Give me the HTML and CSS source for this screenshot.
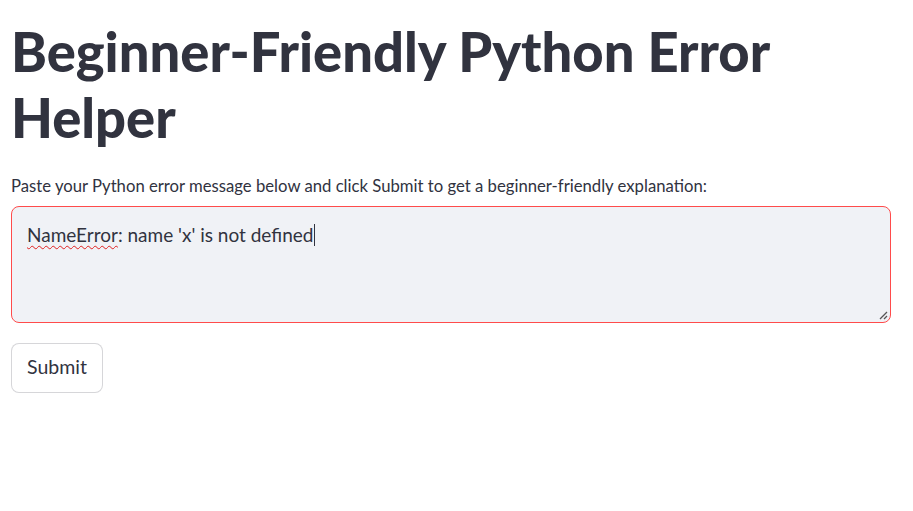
FILE: index.html
```html
<!DOCTYPE html>
<html lang="en">
<head>
<meta charset="utf-8">
<title>Beginner-Friendly Python Error Helper</title>
<link rel="stylesheet" href="styles.css">
</head>
<body>
<main class="app">
  <h1 class="title">Beginner-Friendly Python Error Helper</h1>
  <label class="label">Paste your Python error message below and click Submit to get a beginner-friendly explanation:</label>
  <div class="textarea" role="textbox" aria-multiline="true">
    <span class="misspelled">NameError</span>: name 'x' is not defined<span class="caret"></span>
    <svg class="grip" width="10" height="10" viewBox="0 0 10 10" aria-hidden="true">
      <path d="M2 9 L9 2 M6 9 L9 6" stroke="#555" stroke-width="1.3" fill="none"/>
    </svg>
  </div>
  <button class="button" type="button">Submit</button>
</main>
</body>
</html>
```

FILE: styles.css
```css
html, body {
  margin: 0;
  padding: 0;
  background: #ffffff;
}
body {
  font-family: Lato, "Noto Sans", sans-serif;
  color: #31333f;
}
.app {
  display: flex;
  flex-direction: column;
  align-items: flex-start;
  padding: 18px 22px 0 11px;
}
.title {
  margin: 0;
  font-size: 54.3px;
  line-height: 66px;
  font-weight: 900;
  color: #31333f;
}
.label {
  margin-top: 25px;
  font-size: 16.7px;
  line-height: 22px;
  color: #31333f;
}
.textarea {
  position: relative;
  box-sizing: border-box;
  align-self: stretch;
  margin-top: 9px;
  height: 117px;
  padding: 14px 15px;
  border: 1px solid #ff4b4b;
  border-radius: 8px;
  background: #f0f2f6;
  font-size: 19px;
  line-height: 28px;
  color: #31333f;
}
.misspelled {
  text-decoration: underline wavy #e02020;
  text-decoration-thickness: 1px;
  text-underline-offset: 3px;
}
.caret {
  display: inline-block;
  width: 1px;
  height: 22px;
  background: #31333f;
  vertical-align: -4px;
  margin-left: 1px;
}
.grip {
  position: absolute;
  right: 2px;
  bottom: 2px;
}
.button {
  margin-top: 20px;
  box-sizing: border-box;
  width: 92px;
  height: 50px;
  border: 1px solid rgba(49, 51, 63, 0.2);
  border-radius: 8px;
  background: #ffffff;
  font-family: Lato, "Noto Sans", sans-serif;
  font-size: 19.5px;
  line-height: 1;
  color: #31333f;
  padding: 0 0 2px;
}
```
